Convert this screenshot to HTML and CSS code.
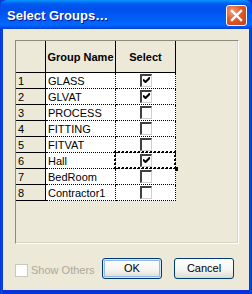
FILE: index.html
```html
<!DOCTYPE html>
<html>
<head>
<meta charset="utf-8">
<link rel="stylesheet" href="styles.css">
</head>
<body>
<div class="window">
  <div class="titlebar">
    <span class="title">Select Groups…</span>
    <span class="close">
      <svg width="13" height="13" viewBox="0 0 13 13"><path d="M2 2 L11 11 M11 2 L2 11" stroke="#fff" stroke-width="2.4" stroke-linecap="square"/></svg>
    </span>
  </div>
  <div class="content">
    <div class="frame">
      <div class="grid">
        <div class="hc corner"></div>
        <div class="hc">Group Name</div>
        <div class="hc">Select</div>

        <div class="rh">1</div><div class="cell">GLASS</div><div class="cell chk"><span class="box on"></span></div>
        <div class="rh">2</div><div class="cell">GLVAT</div><div class="cell chk"><span class="box on"></span></div>
        <div class="rh">3</div><div class="cell">PROCESS</div><div class="cell chk"><span class="box"></span></div>
        <div class="rh">4</div><div class="cell">FITTING</div><div class="cell chk"><span class="box"></span></div>
        <div class="rh">5</div><div class="cell">FITVAT</div><div class="cell chk"><span class="box"></span></div>
        <div class="rh">6</div><div class="cell">Hall</div><div class="cell chk focus"><span class="box on"></span><span class="handle"></span></div>
        <div class="rh">7</div><div class="cell">BedRoom</div><div class="cell chk"><span class="box"></span></div>
        <div class="rh">8</div><div class="cell">Contractor1</div><div class="cell chk"><span class="box"></span></div>
      </div>
    </div>
    <div class="footer">
      <label class="others"><span class="dbox"></span>Show Others</label>
      <button class="btn ok">OK</button>
      <button class="btn">Cancel</button>
    </div>
  </div>
</div>
</body>
</html>
```
FILE: styles.css
```css
* { box-sizing: border-box; }
html, body { margin: 0; padding: 0; }
body { width: 252px; height: 294px; overflow: hidden; background: #0831d9; }

.window {
  width: 252px; height: 294px;
  display: flex; flex-direction: column;
  background: linear-gradient(90deg, #0019cf 0, #0855dd 1px, #0831d9 3px, #0831d9 249px, #0855dd 251px, #0019cf 252px);
  font-family: "Liberation Sans", Arial, sans-serif;
}

.titlebar {
  height: 29px; flex: none;
  display: flex; align-items: center; justify-content: space-between;
  padding: 0 5px 0 7px;
  background: linear-gradient(180deg, #0997ff 0, #0058ee 4px, #0050ee 10px, #0060f8 20px, #0068ff 25px, #0040d8 29px);
  border-radius: 7px 7px 0 0;
}
.title {
  color: #fff; font-weight: bold; font-size: 13px;
  font-family: "Liberation Sans", Arial, sans-serif;
  text-shadow: 1px 1px #0f1089;
  margin-top: 1px;
}
.close {
  width: 21px; height: 21px; display: flex; align-items: center; justify-content: center;
  border: 1px solid #fff; border-radius: 3px;
  background: radial-gradient(circle at 30% 30%, #f0a080 0, #e05a2a 45%, #c83c10 100%);
  margin-top: 1px;
}

.content {
  flex: 1;
  margin: 0 3px 4px 3px;
  background: #ece9d8;
  padding: 11px 10px 0 12px;
  display: flex; flex-direction: column;
}

.frame {
  width: 224px; height: 204px;
  border-top: 1px solid #8d8b80;
  border-left: 1px solid #8d8b80;
  border-right: 1px solid #fff;
  border-bottom: 1px solid #fff;
  background: #ece9d8;
  box-shadow: inset -1px -1px 0 #d8d4c4;
}

.grid {
  display: grid;
  grid-template-columns: 30px 70px 60px;
  grid-template-rows: 32px repeat(8, 16px);
  width: 160px;
  font-size: 11px;
  color: #000;
}

.hc {
  background: #ece9d8;
  border-right: 1px solid #000;
  border-bottom: 1px solid #000;
  font-weight: bold;
  display: flex; align-items: center; justify-content: center;
}
.rh {
  background: #ece9d8;
  border-right: 1px solid #000;
  border-bottom: 1px solid #000;
  padding-left: 2px;
  display: flex; align-items: center;
}
.cell {
  background: #fff;
  border-right: 1px dotted #000;
  border-bottom: 1px dotted #000;
  padding-left: 2px;
  display: flex; align-items: center;
  position: relative;
}
.chk { justify-content: center; padding-left: 0; }

.box {
  width: 12px; height: 13px;
  border-top: 2px solid #404040;
  border-left: 2px solid #404040;
  border-right: 1px solid #d4d0c8;
  border-bottom: 1px solid #d4d0c8;
  background: #fff;
  position: relative;
}
.box.on::after {
  content: "";
  position: absolute;
  left: 1px; top: 1px;
  width: 7px; height: 7px;
  background: url("data:image/svg+xml;utf8,<svg xmlns='http://www.w3.org/2000/svg' width='7' height='7'><path d='M0 2 L0 4 L2 6 L3 6 L7 2 L7 0 L6 0 L2.5 3.5 L1.5 2.5 Z' fill='black'/></svg>") no-repeat;
}

.focus::before {
  content: "";
  position: absolute;
  left: -2px; top: -2px; right: -1px; bottom: -1px;
  border: 2px dotted #000;
}
.handle {
  position: absolute; right: -3px; bottom: -3px;
  width: 4px; height: 4px; background: #000;
}

.footer {
  display: flex; align-items: center;
  margin-top: 14px;
  height: 20px;
}
.others {
  display: flex; align-items: center;
  color: #aca899; font-size: 11px;
  width: 87px; margin-top: 4px;
}
.dbox {
  width: 13px; height: 13px; border: 1px solid #cac8bb; background: #fff;
  margin-right: 3px;
}
.btn {
  width: 60px; height: 21px; margin: 0;
  font-family: "Liberation Sans", Arial, sans-serif; font-size: 11px; color: #000;
  border: 1px solid #003c74; border-radius: 3px;
  background: linear-gradient(180deg, #fff 0, #f4f4f0 60%, #dcdad0 100%);
  padding: 0;
}
.btn.ok {
  margin-right: 12px;
  box-shadow: inset 0 0 0 1px #cee7ff, inset 0 0 0 2px #98b8ea;
}
```
